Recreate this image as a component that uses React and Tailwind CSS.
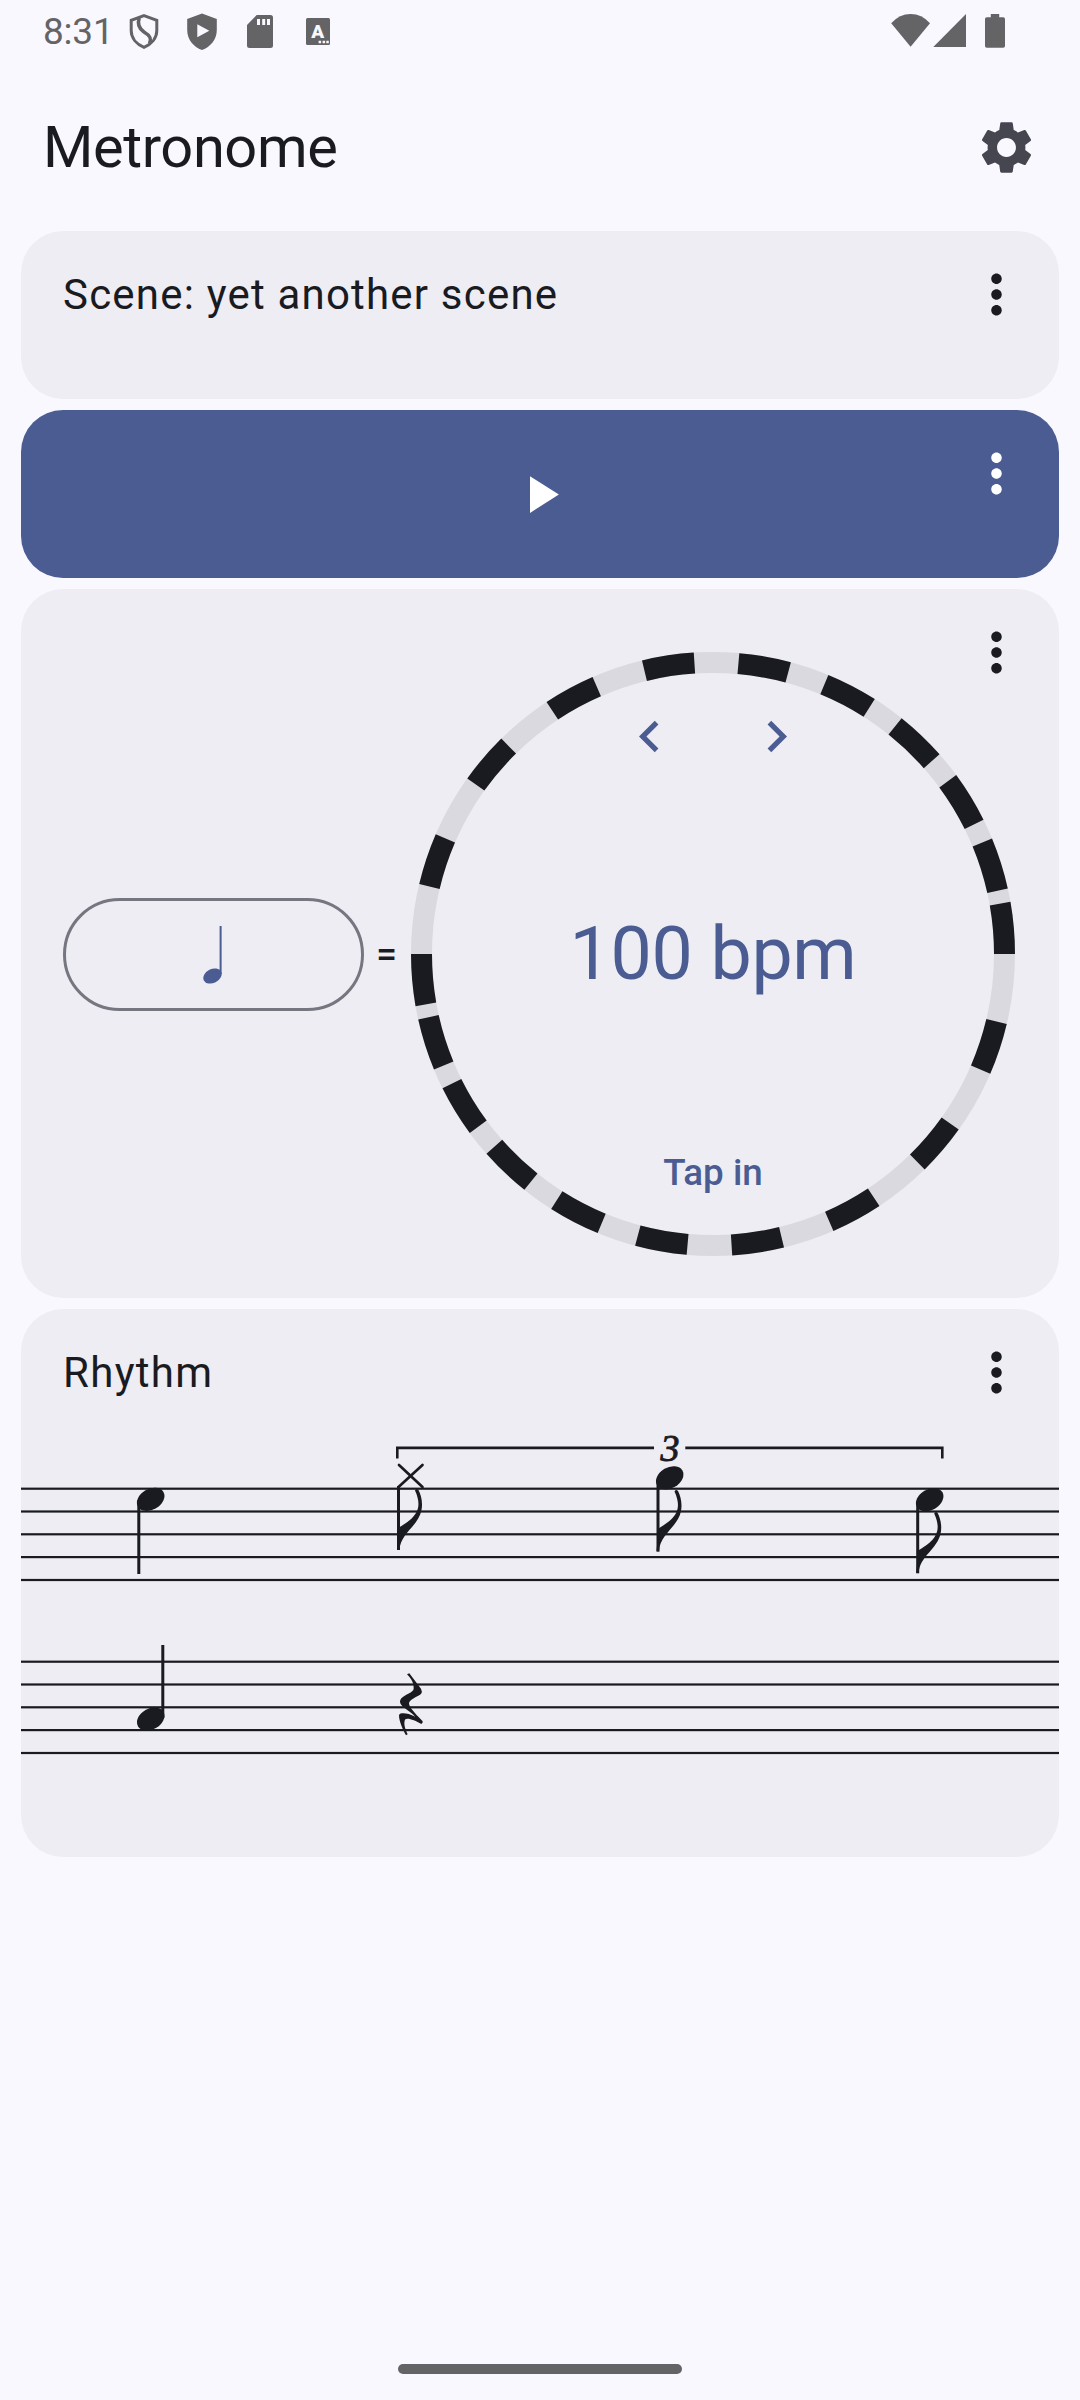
import React from "react";
import {
  MdChevronLeft,
  MdChevronRight,
  MdMoreVert,
  MdPlayArrow,
  MdSettings,
} from "react-icons/md";

// start angle of every dark tick on one half of the dial, in degrees
const TICK_STARTS = [0, 12.55, 26.4, 41.4, 57.6, 75.05, 93.65, 113.5, 134.5, 156.65];
const TICK_SIZE = 9.95;
const STAFF_LINES = [68.7, 91.5, 114.3, 137.1, 160];

function StatusBar() {
  return (
    <div className="flex h-[63px] items-center justify-between pl-[43px] pr-[72px] text-[#646467]">
      <div className="flex items-center">
        <span className="w-[71.5px] text-[37px] leading-[63px] tracking-[-0.2px]">8:31</span>
        <svg viewBox="-29 -31.5 58 63" className="h-[63px] w-[58px]" fill="none" stroke="currentColor" strokeWidth="3">
          <path d="M0-15.8 12.8-11.2V-1C12.8 7 7 13 0 15.8-7 13-12.8 7-12.8-1V-11.2Z" />
          <path d="M-4.8-13.5C-7-7-5-3 0 .5 6 4 8 7 5.5 12" strokeWidth="3.6" />
        </svg>
        <svg viewBox="-29 -31.5 58 63" className="h-[63px] w-[58px]" fill="currentColor">
          <path fillRule="evenodd" d="M0-18 14.8-12.5V-1.5C14.8 8 8.5 15.5 0 18.5-8.5 15.5-14.8 8-14.8-1.5V-12.5ZM-4.7-7.2V5.8L7.3-.8Z" />
        </svg>
        <svg viewBox="-29 -31.5 58 63" className="h-[63px] w-[58px]" fill="currentColor">
          <path fillRule="evenodd" d="M-3.3-16.5H10.5Q13-16.5 13-14V14Q13 16.5 10.5 16.5H-10.5Q-13 16.5-13 14V-6.5ZM-3-12.5V-6.5H0V-12.5ZM2.2-12.5V-6.5H5.2V-12.5ZM7-12.5V-6.5H10V-12.5Z" />
        </svg>
        <svg viewBox="-29 -31.5 58 63" className="h-[63px] w-[58px]">
          <rect x="-12" y="-13.5" width="24" height="27" rx="1.5" fill="currentColor" />
          <text x="-.2" y="6.5" textAnchor="middle" fill="#faf8ff" className="text-[19px] font-black">A</text>
          <path d="M.6 9.3h2.5v2.5H.6zM4.6 9.3h2.5v2.5H4.6zM8.3 9.3h2.5v2.5H8.3z" fill="#faf8ff" />
        </svg>
      </div>
      <div className="flex items-center">
        <svg viewBox="0 0 42 63" className="h-[63px] w-[42px]" fill="currentColor">
          <path d="M20.6 46.7 1.2 23.2Q9.5 14 20.6 14T40 23.2Z" />
        </svg>
        <svg viewBox="0 0 42 63" className="h-[63px] w-[42px]" fill="currentColor">
          <path d="M1.3 47H34V14Z" />
        </svg>
        <svg viewBox="0 0 34 63" className="h-[63px] w-[34px]" fill="currentColor">
          <path d="M16.8 14h8.4v3.3h4q1.8 0 1.8 1.8V46q0 1.8-1.8 1.8H12.8q-1.8 0-1.8-1.8V19.1q0-1.8 1.8-1.8h4z" />
        </svg>
      </div>
    </div>
  );
}

function Card({ className, children }) {
  return (
    <section className={`relative rounded-[42px] ${className}`}>
      {children}
      <button className="absolute right-[31px] top-[32px]" aria-label="More">
        <MdMoreVert size={63} />
      </button>
    </section>
  );
}

function Dial() {
  const ticks = [...TICK_STARTS, ...TICK_STARTS.map((a) => a + 180)];
  const point = (deg) => {
    const rad = ((180 - deg) * Math.PI) / 180;
    return `${(302 + 291.5 * Math.cos(rad)).toFixed(2)} ${(302 + 291.5 * Math.sin(rad)).toFixed(2)}`;
  };

  return (
    <div className="relative flex h-[604px] w-[604px] flex-col items-center justify-between pt-[53px] pb-[57px] text-[#4a5c92]">
      <svg viewBox="0 0 604 604" className="absolute inset-0 h-full w-full" fill="none" strokeWidth="21">
        <circle cx="302" cy="302" r="291.5" stroke="#dad9e0" />
        {ticks.map((start) => (
          <path
            key={start}
            d={`M${point(start)}A291.5 291.5 0 0 0 ${point(start + TICK_SIZE)}`}
            stroke="#1a1b21"
          />
        ))}
      </svg>
      <div className="flex gap-[64px]">
        <MdChevronLeft size={63} />
        <MdChevronRight size={63} />
      </div>
      <p className="mb-[6px] text-[73.5px] leading-[94px] tracking-[-0.3px]">100 bpm</p>
      <button className="text-[36.75px] leading-[53px] font-medium">Tap in</button>
    </div>
  );
}

function NoteHead({ x, y }) {
  return <ellipse rx="14.7" ry="10.4" transform={`translate(${x} ${y}) rotate(-30)`} />;
}

function Flag({ x, y }) {
  return (
    <path
      transform={`translate(${x} ${y})`}
      d="M20-60Q18-62 16.5-59.5C20-52 20.5-46 19.5-42 17.5-33 8-27 .5-22.5L-1.5 0H1C2-17 20-24 23-40 24.5-48 22.5-55 20-60Z"
    />
  );
}

function Staff({ children }) {
  return (
    <svg viewBox="0 0 1038 173" className="block h-[173px] w-[1038px]" fill="#1a1b21">
      {STAFF_LINES.map((y) => (
        <rect key={y} x="0" y={y - 1.1} width="1038" height="2.2" />
      ))}
      {children}
    </svg>
  );
}

function Rhythm() {
  return (
    <div className="mt-[16px]">
      <Staff>
        <NoteHead x={129.7} y={79.3} />
        <rect x="116.3" y="80" width="3" height="74" />

        {/* triplet bracket */}
        <path d="M376.3 38.5V27.9H633M664.3 27.9H921.3V38.5" fill="none" stroke="#1a1b21" strokeWidth="2.6" />
        <text
          x="649"
          y="40.5"
          textAnchor="middle"
          stroke="#1a1b21"
          strokeWidth=".9"
          className="font-['Liberation_Serif',serif] text-[38px] italic"
        >
          3
        </text>

        <path d="M378 45 401.5 67M401.5 45 377.5 67" fill="none" stroke="#1a1b21" strokeWidth="2.7" strokeLinecap="round" />
        <rect x="376" y="66" width="3" height="64" />
        <Flag x={377.5} y={130} />

        <NoteHead x={648.7} y={57.8} />
        <rect x="635.5" y="60" width="3" height="71.7" />
        <Flag x={637} y={131} />

        <NoteHead x={908.7} y={79.7} />
        <rect x="895.2" y="82" width="3" height="71.3" />
        <Flag x={896.7} y={153} />
      </Staff>
      <Staff>
        <NoteHead x={129.7} y={126} />
        <rect x="140.3" y="52" width="3" height="73" />
        {/* quarter rest */}
        <path
          transform="translate(-21 27) scale(.33333)"
          d="M1228 160 1263 206Q1268 215 1263 222C1250 232 1228 238 1227 250 1228 262 1240 275 1268 304Q1270 308 1264 312C1245 300 1222 292 1216 298 1210 308 1214 325 1223 343L1218 346C1208 328 1198 305 1197 288Q1197 281 1206 280C1216 279 1230 282 1246 290 1235 278 1212 264 1204 255Q1196 245 1204 235C1215 222 1240 218 1241 206 1242 190 1235 178 1221 163Z"
        />
      </Staff>
    </div>
  );
}

function App() {
  return (
    <div className="flex h-[2400px] w-[1080px] flex-col bg-[#faf8ff] font-[Roboto,sans-serif] text-[#1a1b21]">
      <StatusBar />
      <header className="flex h-[168px] items-center justify-between pl-[43px] pr-[42px]">
        <h1 className="text-[57.75px] leading-[74px] tracking-[-0.4px]">Metronome</h1>
        <MdSettings size={63} className="text-[#45464f]" />
      </header>

      <main className="flex flex-col gap-[11px] px-[21px]">
        <Card className="h-[168px] bg-[#eeedf4] px-[42px] pt-[32px]">
          <p className="text-[42px] leading-[63px] tracking-[1.2px]">Scene: yet another scene</p>
        </Card>

        <Card className="flex h-[168px] items-center justify-center bg-[#4a5c92] text-white">
          <MdPlayArrow size={63} />
        </Card>

        <Card className="flex h-[709px] items-start bg-[#eeedf4] pl-[42px] pt-[63px]">
          <div className="flex h-[604px] items-center">
            <button className="flex h-[113px] w-[301px] items-center justify-center rounded-full border-[3px] border-[#757680] text-[#4a5c92]">
              <svg viewBox="0 0 22 60" className="h-[60px] w-[22px]" fill="currentColor">
                <ellipse rx="9.7" ry="6.9" transform="translate(9.5 52) rotate(-27)" />
                <rect x="16.6" y="2" width="2" height="48" />
              </svg>
            </button>
            <span className="w-[47px] pr-[2px] pb-[2px] text-center text-[36.75px] leading-[53px] font-medium">=</span>
          </div>
          <Dial />
        </Card>

        <Card className="h-[548px] bg-[#eeedf4] pt-[32px]">
          <h2 className="px-[42px] text-[42px] leading-[63px] tracking-[1.31px]">Rhythm</h2>
          <Rhythm />
        </Card>
      </main>

      <div className="mx-auto mt-auto mb-[26px] h-[10px] w-[284px] rounded-full bg-[#646467]" />
    </div>
  );
}

export default App;
